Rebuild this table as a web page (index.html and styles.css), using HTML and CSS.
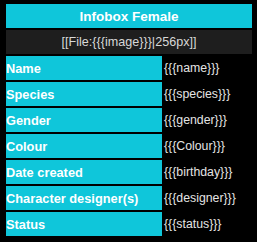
FILE: index.html
```html
<!DOCTYPE html>
<html lang="en">
<head>
<meta charset="utf-8">
<title>Infobox Female</title>
<link rel="stylesheet" href="styles.css">
</head>
<body>
<table class="infobox">
  <colgroup>
    <col class="col-label">
    <col class="col-value">
  </colgroup>
  <tr><th class="title" colspan="2">Infobox Female</th></tr>
  <tr><td class="image" colspan="2">[[File:{{{image}}}|256px]]</td></tr>
  <tr><th class="label">Name</th><td class="value">{{{name}}}</td></tr>
  <tr><th class="label">Species</th><td class="value">{{{species}}}</td></tr>
  <tr><th class="label">Gender</th><td class="value">{{{gender}}}</td></tr>
  <tr><th class="label">Colour</th><td class="value">{{{Colour}}}</td></tr>
  <tr><th class="label">Date created</th><td class="value">{{{birthday}}}</td></tr>
  <tr><th class="label">Character designer(s)</th><td class="value">{{{designer}}}</td></tr>
  <tr><th class="label">Status</th><td class="value">{{{status}}}</td></tr>
</table>
</body>
</html>
```
FILE: styles.css
```css
html, body {
  background: #000;
}

body {
  margin: 0;
  padding: 2px 3px 0 4px;
  font-family: "Liberation Sans", Arial, sans-serif;
}

.infobox {
  width: 250px;
  border-collapse: separate;
  border-spacing: 2px;
  table-layout: fixed;
}

.col-label { width: 156px; }
.col-value { width: 88px; }

.infobox th,
.infobox td {
  height: 24px;
  padding: 0;
  vertical-align: middle;
  box-sizing: border-box;
}

.title {
  background: #0fc6da;
  color: #fff;
  font-size: 13.5px;
  font-weight: bold;
  text-align: center;
}

.image {
  background: #1e1e1e;
  color: #d8d8d8;
  font-size: 12.6px;
  text-align: center;
}

.label {
  background: #0fc6da;
  color: #fff;
  font-size: 12.8px;
  font-weight: bold;
  text-align: left;
  padding-left: 1px;
  white-space: nowrap;
}

.value {
  color: #e4e4e4;
  font-size: 12.3px;
  padding-left: 2px;
  white-space: nowrap;
}
```
